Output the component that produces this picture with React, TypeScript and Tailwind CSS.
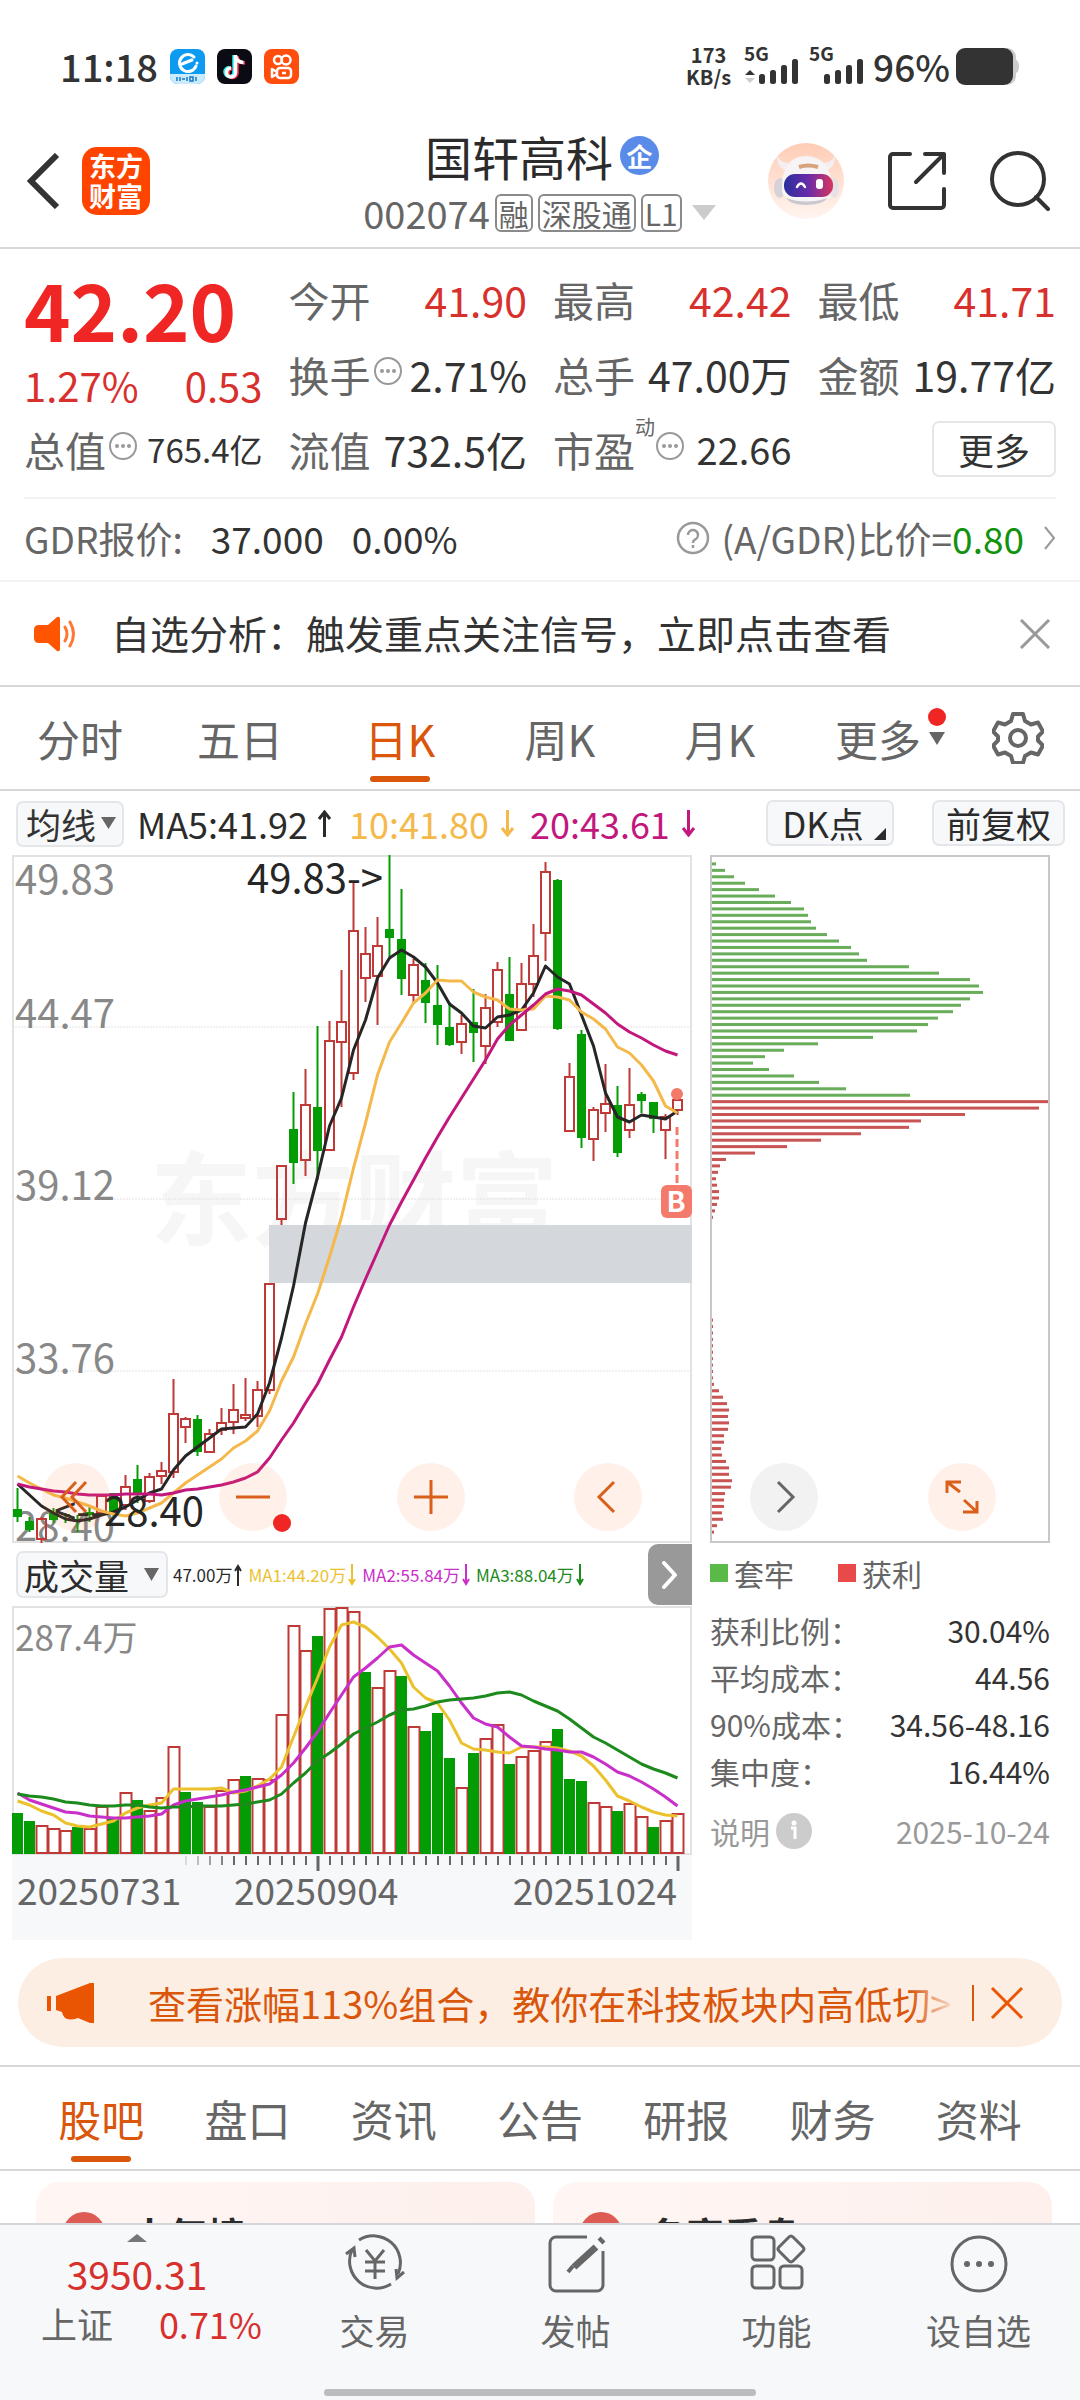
import type { ReactNode } from "react";

type Candle = [dir: "up" | "down", high: number, top: number, bottom: number, low: number];

const STEP = 12;
const START = 5.5;

const candles: Candle[] = [
    ["down", 633, 654, 662, 667],
    ["down", 662, 666, 675, 677],
    ["up", 662, 664, 684, 688],
    ["down", 653, 658, 665, 668],
    ["down", 658, 659, 660, 668],
    ["down", 660, 664, 666, 677],
    ["down", 650, 657, 660, 667],
    ["up", 640, 641, 658, 660],
    ["down", 638, 638, 658, 662],
    ["up", 620, 632, 650, 655],
    ["down", 610, 624, 640, 648],
    ["up", 618, 622, 646, 648],
    ["up", 607, 616, 621, 629],
    ["up", 524, 559, 617, 623],
    ["up", 562, 564, 572, 588],
    ["down", 560, 564, 597, 601],
    ["up", 574, 579, 597, 597],
    ["up", 553, 568, 575, 580],
    ["up", 529, 555, 567, 579],
    ["up", 523, 560, 563, 566],
    ["up", 526, 535, 561, 572],
    ["up", 428, 429, 535, 539],
    ["up", 310, 311, 364, 370],
    ["down", 237, 274, 308, 329],
    ["up", 214, 250, 305, 321],
    ["down", 171, 252, 296, 325],
    ["up", 166, 186, 295, 296],
    ["up", 115, 167, 187, 252],
    ["up", 27, 76, 218, 225],
    ["up", 72, 99, 123, 147],
    ["up", 62, 91, 121, 170],
    ["down", 0, 74, 83, 102],
    ["down", 34, 84, 124, 140],
    ["up", 104, 110, 140, 148],
    ["down", 108, 125, 148, 168],
    ["down", 110, 150, 170, 190],
    ["down", 147, 172, 190, 191],
    ["up", 160, 169, 187, 199],
    ["down", 134, 167, 178, 207],
    ["up", 139, 153, 191, 209],
    ["up", 107, 115, 167, 172],
    ["down", 102, 139, 186, 186],
    ["up", 108, 129, 175, 175],
    ["up", 69, 101, 129, 142],
    ["up", 7, 17, 78, 106],
    ["down", 24, 25, 174, 175],
    ["up", 208, 222, 276, 276],
    ["down", 175, 179, 283, 293],
    ["up", 252, 255, 284, 306],
    ["up", 209, 249, 258, 277],
    ["down", 231, 250, 298, 302],
    ["up", 213, 250, 275, 283],
    ["down", 237, 239, 246, 258],
    ["down", 247, 247, 264, 278],
    ["up", 259, 262, 275, 304],
    ["up", 237, 245, 255, 260],
];

const ma5 = [
    629, 640, 651, 658, 664, 666, 664, 660, 657, 652, 645, 638, 634, 615, 601, 592, 583, 574, 573, 572, 559, 528,
    483, 431, 368, 322, 271, 243, 195, 165, 123, 103, 95, 102, 112, 128, 149, 158, 171, 173, 162, 160, 155, 138,
    111, 122, 129, 160, 191, 238, 262, 267, 260, 262, 264, 256,
];
const ma10 = [
    621, 628, 634, 640, 643, 647, 651, 656, 659, 661, 658, 653, 648, 638, 628, 620, 612, 604, 593, 586, 576, 556,
    526, 502, 469, 439, 402, 362, 313, 268, 220, 187, 168, 148, 138, 125, 126, 126, 137, 142, 145, 154, 155, 154,
    141, 142, 145, 157, 164, 174, 192, 198, 210, 226, 251, 258,
];
const ma20 = [
    629, 632, 634, 636, 637, 639, 640, 640, 640, 639, 639, 639, 640, 638, 635, 634, 632, 630, 627, 623, 617, 603,
    585, 568, 548, 529, 505, 482, 452, 424, 397, 370, 347, 325, 303, 282, 262, 243, 224, 205, 184, 170, 160, 150,
    139, 134, 136, 140, 149, 158, 169, 177, 183, 190, 196, 200,
];

// negative = falling day
const volumes = [
    -41, -33, 29, 26, 24, -27, 26, 48, -37, 62, -54, 44, 57, 108, -62, -52, 48, 64, 75, -78, 76, 75, 140, 229, 204,
    -218, 246, 247, 243, -182, 167, 184, -178, 128, -123, -141, -96, 67, -101, 116, 130, -90, 98, 104, 113, -125,
    -75, -73, 52, 48, -43, 51, 38, -27, 34, 41,
];
const vma1 = [
    195, 199, 205, 209, 217, 220, 221, 218, 215, 207, 202, 199, 197, 183, 183, 183, 183, 182, 187, 185, 180, 173,
    161, 131, 101, 72, 41, 19, 16, 21, 31, 43, 57, 81, 92, 97, 114, 137, 143, 144, 146, 147, 141, 141, 141, 142,
    145, 150, 160, 174, 190, 195, 201, 206, 209, 210,
];
const vma2 = [
    187, 194, 198, 202, 206, 207, 210, 211, 212, 212, 211, 210, 208, 199, 195, 193, 191, 189, 186, 184, 181, 178,
    169, 157, 142, 126, 107, 89, 71, 62, 52, 41, 39, 49, 57, 65, 80, 97, 112, 118, 121, 131, 140, 141, 143, 144,
    146, 146, 151, 158, 166, 170, 176, 183, 191, 200,
];
const vma3 = [
    188, 190, 191, 193, 196, 197, 199, 200, 200, 199, 199, 201, 202, 201, 201, 200, 200, 200, 199, 198, 196, 194,
    188, 177, 167, 155, 147, 138, 128, 122, 116, 109, 104, 103, 100, 96, 94, 93, 92, 90, 87, 86, 89, 95, 100, 105,
    113, 122, 131, 137, 144, 151, 158, 163, 167, 172,
];

const trapped = [
    1, 5, 14, 23, 34, 48, 64, 80, 93, 97, 100, 105, 116, 128, 140, 148, 156, 198, 228, 259, 268, 272, 259, 250, 242,
    227, 217, 206, 162, 107, 73, 54, 42, 58, 83, 108, 135, 199,
];
const profit = [
    339, 328, 254, 210, 198, 150, 110, 76, 44, 15, 9, 7, 5, 6, 8, 8, 6, 4, 2, 1, 0, 0, 0, 0, 0, 0, 0, 0, 0, 1, 1, 1,
    1, 1, 2, 2, 2, 2, 2, 2, 2, 2, 2, 2, 3, 8, 12, 16, 18, 17, 18, 17, 13, 13, 10, 11, 15, 18, 18, 21, 20, 14, 13,
    13, 11, 12, 6, 3, 1,
];

const line = (ys: number[]) => ys.map((y, i) => `${START + i * STEP},${y}`).join(" ");

const RED = "#bf3a36";
const GREEN = "#049c04";

function StatusBar() {
    return (
        <div className="flex h-[100px] items-end justify-between pr-[60px] pb-[12px] pl-[60px] text-[#333]">
            <div className="flex items-center gap-[12px]">
                <span className="text-[38px] leading-[44px] font-medium">11:18</span>
                <svg width="35" height="35" viewBox="0 0 35 35">
                    <rect width="35" height="35" rx="8" fill="#0c9bf0" />
                    <path d="M0 25h35v2a8 8 0 0 1-8 8H8a8 8 0 0 1-8-8z" fill="#c9ebfb" />
                    <path d="M24 8a8.500 8.500 0 1 0 2 9M12 15l10-4" fill="none" stroke="#fff" strokeWidth="3" strokeLinecap="round" />
                    <circle cx="27" cy="14" r="1.500" fill="#fff" />
                    <path d="M7 28v4m3-4v4m2-2h3m2-2v4m3-4h3v4h-3zm6 0v4" stroke="#1577c4" strokeWidth="1.500" fill="none" />
                </svg>
                <svg width="35" height="35" viewBox="0 0 35 35">
                    <rect width="35" height="35" rx="8" fill="#0b0b14" />
                    <g fill="none" strokeWidth="3.500">
                        <path d="M17 6v17a4.500 4.500 0 1 1-4.500-4.500M17 7c1 4 4 6 8 6" stroke="#25f4ee" />
                        <path d="M20 7v17a4.500 4.500 0 1 1-4.500-4.500M20 8c1 4 4 6 8 6" stroke="#fe2c55" />
                        <path d="M18.500 6v17.500a4.500 4.500 0 1 1-4.500-4.500M18.500 7c1 4 4 6.500 8 6.500" stroke="#fff" />
                    </g>
                </svg>
                <svg width="35" height="35" viewBox="0 0 35 35">
                    <rect width="35" height="35" rx="8" fill="#ff4d0d" />
                    <g fill="none" stroke="#fff" strokeWidth="2.500">
                        <circle cx="14" cy="11" r="4" />
                        <circle cx="22" cy="11" r="4.500" />
                        <rect x="13" y="19" width="14" height="10" rx="3" />
                        <path d="M13 23l-5-3v8l5-3" strokeLinejoin="round" />
                        <path d="M18 24h4" />
                    </g>
                </svg>
            </div>
            <div className="flex items-center">
                <div className="mr-[12px] text-center text-[20px] leading-[22px] font-bold">
                    173
                    <br />
                    KB/s
                </div>
                <Signal arrows />
                <Signal />
                <span className="mr-[6px] text-[37px] leading-[44px] font-medium">96%</span>
                <svg width="64" height="37" viewBox="0 0 64 37">
                    <path d="M50 0h1a9 9 0 0 1 9 9v3q3 1 3 6.500t-3 6.500v3a9 9 0 0 1-9 9h-1z" fill="#ccc" />
                    <rect width="57" height="37" rx="9" fill="#333" />
                </svg>
            </div>
        </div>
    );
}

function Signal({ arrows }: { arrows?: boolean }) {
    return (
        <svg width="65" height="38" viewBox="0 0 65 38" className="overflow-visible text-[19px] font-bold">
            <text x="1" y="14" fill="#333">5G</text>
            {arrows && (
                <>
                    <path d="M2 28l5-5 5 5z" fill="#333" />
                    <path d="M2 31l5 5 5-5z" fill="#ccc" />
                </>
            )}
            <g fill="#333">
                <rect x="16" y="27" width="6" height="10" rx="2.500" />
                <rect x="27" y="23" width="6" height="14" rx="2.500" />
                <rect x="38" y="18" width="6" height="19" rx="2.500" />
                <rect x="49" y="12" width="6" height="25" rx="2.500" />
            </g>
        </svg>
    );
}

function Robot() {
    return (
        <svg width="76" height="76" viewBox="0 0 76 76">
            <defs>
                <linearGradient id="halo" x1="0" y1="0" x2="0" y2="1">
                    <stop offset="0" stopColor="#ffccb5" />
                    <stop offset="1" stopColor="#fff5f0" />
                </linearGradient>
                <linearGradient id="visor" x1="0" y1="0" x2="1" y2="0">
                    <stop offset="0" stopColor="#2a2f9e" />
                    <stop offset="0.500" stopColor="#6a2ba8" />
                    <stop offset="1" stopColor="#d8365e" />
                </linearGradient>
            </defs>
            <circle cx="38" cy="38" r="38" fill="url(#halo)" />
            <path d="M9 12q-1 12 8 15l4-7q-9 0-12-8zM67 12q1 12-8 15l-4-7q9 0 12-8z" fill="#f4eeee" />
            <ellipse cx="12" cy="45" rx="6" ry="10" fill="#d6d2d8" />
            <ellipse cx="66" cy="45" rx="5" ry="10" fill="#e6e1e4" />
            <path d="M14 46q-1-32 24-33 26 1 26 33 0 15-26 16-24-1-24-16z" fill="#f7f4f5" />
            <path d="M18 55q20 7 42 0-6 7-22 7t-20-7z" fill="#ccc8d0" />
            <rect x="16" y="31" width="49" height="23" rx="11" fill="url(#visor)" />
            <path d="M31 24q9-3 19 0" stroke="#d8a27c" strokeWidth="4" fill="none" />
            <path d="M29 44q4-7 8 0" stroke="#fff" strokeWidth="2.500" fill="none" strokeLinecap="round" />
            <rect x="48" y="36" width="7" height="10" rx="3" fill="#fff" />
        </svg>
    );
}

function Tag({ children }: { children: ReactNode }) {
    return (
        <span className="flex h-[38px] items-center rounded-[6px] border-2 border-[#8a8a8a] px-[2px] text-[30px] leading-[36px]">{children}</span>
    );
}

function Header() {
    return (
        <header className="grid h-[149px] grid-cols-[1fr_auto_1fr] items-center border-b-2 border-[#d8d8d8] pr-[30px] pl-[26px]">
            <div className="flex items-center gap-[22px] pt-[14px]">
                <button aria-label="返回">
                    <svg width="34" height="56" viewBox="0 0 34 56" fill="none" stroke="#333" strokeWidth="6">
                        <path d="M31 2L5 28l26 26" />
                    </svg>
                </button>
                <a href="#home" className="flex size-[68px] flex-col justify-center rounded-[15px] bg-[#ff4400] text-center text-[27px] leading-[30px] font-bold text-white">
                    <span>东方</span>
                    <span>财富</span>
                </a>
            </div>
            <div className="ml-[8px] flex flex-col items-center pt-[20px]">
                <h1 className="flex items-center gap-[7px] text-[47px] leading-[58px] text-[#2b2b2b]">
                    国轩高科
                    <span className="flex size-[39px] items-center justify-center rounded-full bg-[#5a8be8] text-[26px] leading-[28px] font-bold text-white">企</span>
                </h1>
                <button className="flex items-center gap-[5px] text-[#666]">
                    <span className="text-[38px] leading-[56px]">002074</span>
                    <Tag>融</Tag>
                    <Tag>深股通</Tag>
                    <Tag>L1</Tag>
                    <svg width="34" height="16" viewBox="0 0 34 16" fill="#ccc">
                        <path d="M5 0h24L17 15z" />
                    </svg>
                </button>
            </div>
            <div className="flex items-center justify-end gap-[43px] pt-[14px]">
                <button aria-label="智能助手"><Robot /></button>
                <button aria-label="分享">
                    <svg width="60" height="60" viewBox="0 0 60 60" fill="none" stroke="#333" strokeWidth="4" strokeLinecap="round" strokeLinejoin="round">
                        <path d="M23 3H6a3 3 0 0 0-3 3v48a3 3 0 0 0 3 3h48a3 3 0 0 0 3-3V38" />
                        <path d="M38 3h19v19M57 3L29 31" />
                    </svg>
                </button>
                <button aria-label="搜索">
                    <svg width="60" height="60" viewBox="0 0 60 60" fill="none" stroke="#333" strokeWidth="4" strokeLinecap="round">
                        <circle cx="28" cy="28" r="26" />
                        <path d="M46 46l12 12" />
                    </svg>
                </button>
            </div>
        </header>
    );
}

function Dots() {
    return (
        <svg width="30" height="30" viewBox="0 0 30 30" className="mb-[6px] shrink-0">
            <circle cx="15" cy="15" r="13" fill="none" stroke="#999" strokeWidth="2" />
            <g fill="#999">
                <circle cx="9" cy="15" r="2" />
                <circle cx="15" cy="15" r="2" />
                <circle cx="21" cy="15" r="2" />
            </g>
        </svg>
    );
}

function Stat({ label, value, red, dots }: { label: string; value: string; red?: boolean; dots?: boolean }) {
    return (
        <div className="flex items-center justify-between whitespace-nowrap">
            <span className="flex items-center gap-[2px] text-[41px] leading-[56px] text-[#666]">
                {label}
                {dots && <Dots />}
            </span>
            <span className={red ? "text-[41px] leading-[56px] text-[#d8302d]" : "text-[41px] leading-[56px] text-[#333]"}>{value}</span>
        </div>
    );
}

function Quote() {
    return (
        <section className="px-[24px]">
            <div className="grid auto-rows-[75px] grid-cols-4 gap-x-[26px] border-b-2 border-[#f2f2f4] pt-[12px] pb-[11px]">
                <div className="row-span-2 whitespace-nowrap">
                    <div className="text-[79px] leading-[94px] font-bold text-[#f02624]">42.20</div>
                    <div className="flex justify-between text-[40px] leading-[60px] text-[#d8302d]">
                        <span>1.27%</span>
                        <span>0.53</span>
                    </div>
                </div>
                <Stat label="今开" value="41.90" red />
                <Stat label="最高" value="42.42" red />
                <Stat label="最低" value="41.71" red />
                <Stat label="换手" value="2.71%" dots />
                <Stat label="总手" value="47.00万" />
                <Stat label="金额" value="19.77亿" />
                <div className="flex items-center justify-between whitespace-nowrap">
                    <span className="flex items-center gap-[2px] text-[41px] leading-[56px] text-[#666]">
                        总值
                        <Dots />
                    </span>
                    <span className="text-[33px] leading-[56px] text-[#333]">765.4亿</span>
                </div>
                <Stat label="流值" value="732.5亿" />
                <div className="flex items-center justify-between whitespace-nowrap">
                    <span className="flex items-center text-[41px] leading-[56px] text-[#666]">
                        市盈
                        <sup className="mb-[24px] text-[20px] leading-[24px]">动</sup>
                        <Dots />
                    </span>
                    <span className="text-[38px] leading-[56px] text-[#333]">22.66</span>
                </div>
                <div className="flex items-center justify-end">
                    <button className="h-[56px] w-[124px] rounded-[7px] border-2 border-[#e6e6e6] text-[36px] leading-[48px] text-[#333]">更多</button>
                </div>
            </div>
            <a href="#gdr" className="flex h-[81px] items-center justify-between pb-[4px] text-[37px] leading-[52px] text-[#333]">
                <span className="flex gap-[28px]">
                    <span className="text-[#666]">GDR报价:</span>
                    <span>37.000</span>
                    <span>0.00%</span>
                </span>
                <span className="flex items-center text-[#666]">
                    <svg width="34" height="34" viewBox="0 0 34 34" fill="none" stroke="#999" strokeWidth="2.500" className="mr-[12px]">
                        <circle cx="17" cy="17" r="15" />
                        <path d="M12 14a5 5 0 1 1 7 4.500q-2 1-2 3.500M17 24v3" />
                    </svg>
                    (A/GDR)比价=<span className="text-[#12920f]">0.80</span>
                    <svg width="12" height="24" viewBox="0 0 12 24" fill="none" stroke="#999" strokeWidth="2" className="ml-[20px]">
                        <path d="M1 1l9 11-9 11" />
                    </svg>
                </span>
            </a>
        </section>
    );
}

function Notice() {
    return (
        <div className="flex h-[107px] items-center border-t-2 border-b-2 border-t-[#f2f2f4] border-b-[#d8d8d8] pr-[29px] pl-[34px]">
            <svg width="44" height="36" viewBox="0 0 44 36" className="mr-[33px]">
                <path d="M5 9h9l9-8q3-1 3 2v30q0 3-3 2l-9-8H5q-5 0-5-5v-8q0-5 5-5z" fill="#ff5500" />
                <path d="M31 11q4 7 0 14M36 6q7 12 0 24" fill="none" stroke="#ff7733" strokeWidth="3" strokeLinecap="round" />
            </svg>
            <p className="flex-1 pb-[3px] text-[39px] leading-[56px] text-[#333]">自选分析：触发重点关注信号，立即点击查看</p>
            <button aria-label="关闭">
                <svg width="32" height="30" viewBox="0 0 32 30" stroke="#999" strokeWidth="3">
                    <path d="M2 1l28 28M30 1L2 29" />
                </svg>
            </button>
        </div>
    );
}

const periods = ["分时", "五日", "日K", "周K", "月K"];

function PeriodTabs() {
    return (
        <nav className="grid h-[104px] grid-cols-[repeat(5,4fr)_4.5fr_2.5fr] border-b-2 border-[#d8d8d8] text-[43px] leading-[64px] text-[#666]">
            {periods.map((name) => (
                <button key={name} className={name === "日K" ? "relative text-[#d9560b]" : "relative"}>
                    {name}
                    {name === "日K" && <span className="absolute bottom-[7px] left-1/2 h-[6px] w-[60px] -translate-x-1/2 rounded-full bg-[#d9560b]" />}
                </button>
            ))}
            <button className="relative flex items-center justify-center gap-[8px]">
                更多
                <svg width="16" height="13" viewBox="0 0 16 13" fill="#666">
                    <path d="M0 0h16L8 13z" />
                </svg>
                <span className="absolute top-[21px] right-[34px] size-[18px] rounded-full bg-[#f02624]" />
            </button>
            <button aria-label="设置" className="flex items-center justify-center pr-[24px]">
                <svg width="52" height="52" viewBox="0 0 52 52" fill="none" stroke="#666" strokeWidth="4" strokeLinejoin="round">
                    <path d="M21 2h10l2 7 6 3.500 7-2 5 9-5 5v4l5 5-5 9-7-2-6 3.500-2 7H21l-2-7-6-3.500-7 2-5-9 5-5v-4l-5-5 5-9 7 2L19 9z" />
                    <circle cx="26" cy="26" r="8" />
                </svg>
            </button>
        </nav>
    );
}

function MaBar() {
    return (
        <div className="flex h-[64px] items-center pr-[15px] pl-[16px] text-[36px] leading-[46px] whitespace-nowrap">
            <div className="relative mr-[13px]">
                <select aria-label="主图指标" className="h-[46px] w-[108px] appearance-none rounded-[7px] border-2 border-[#e4e6ea] bg-[#f7f8fa] pl-[8px] text-[35px] leading-[42px] text-[#333]">
                    <option>均线</option>
                </select>
                <svg width="15" height="12" viewBox="0 0 15 12" fill="#666" className="pointer-events-none absolute top-[17px] right-[8px]">
                    <path d="M0 0h15L7.500 12z" />
                </svg>
            </div>
            <span className="mr-[17px] flex items-center gap-[9px] text-[#2b2b2b]">MA5:41.92<Arrow up /></span>
            <span className="mr-[15px] flex items-center gap-[11px] text-[#f4b94a]">10:41.80<Arrow /></span>
            <span className="flex flex-1 items-center gap-[11px] text-[#c2187e]">20:43.61<Arrow /></span>
            <button className="relative mr-[38px] h-[46px] w-[128px] rounded-[7px] border-2 border-[#e4e6ea] bg-[#f7f8fa] pr-[14px] text-[35px] leading-[42px] text-[#2b2b2b]">
                DK点
                <svg width="12" height="12" viewBox="0 0 12 12" fill="#2b2b2b" className="absolute right-[6px] bottom-[4px]">
                    <path d="M12 0v12H0z" />
                </svg>
            </button>
            <button className="h-[46px] w-[133px] rounded-[7px] border-2 border-[#e4e6ea] bg-[#f7f8fa] text-[35px] leading-[42px] text-[#2b2b2b]">前复权</button>
        </div>
    );
}

function Arrow({ up, small }: { up?: boolean; small?: boolean }) {
    return (
        <svg width={small ? 8 : 15} height={small ? 22 : 27} viewBox={small ? "0 0 8 22" : "0 0 15 27"} fill="none" stroke="currentColor" strokeWidth={small ? 2 : 3}>
            {small ? (
                up ? <path d="M4 22V3M1 7l3-5 3 5" /> : <path d="M4 0v19M1 15l3 5 3-5" />
            ) : up ? (
                <path d="M7.500 27V2M2 9l5.500-7L13 9" />
            ) : (
                <path d="M7.500 0v25M2 18l5.500 7 5.500-7" />
            )}
        </svg>
    );
}

function KLineChart() {
    return (
        <svg viewBox="0 0 680 688" className="block h-auto w-full">
            <text x="138" y="383" fontSize="102" fontWeight="700" fill="#f6f6f6">东方财富</text>
            <g stroke="#e2e2e2" strokeWidth="2">
                <path d="M1 688V1h678v687" fill="none" />
                <path d="M0 687h680" />
                <path d="M0 172h680M0 344h680M0 516h680" strokeDasharray="2 1" strokeWidth="1" />
            </g>
            <rect x="257" y="370" width="423" height="58" fill="#d4d7dc" />
            <g fill="#888" fontSize="40">
                <text x="3" y="39">49.83</text>
                <text x="3" y="173">44.47</text>
                <text x="3" y="345">39.12</text>
                <text x="3" y="518">33.76</text>
                <text x="3" y="686">28.40</text>
            </g>
            {candles.map(([dir, high, top, bottom, low], i) => {
                const x = START + i * STEP;
                const h = Math.max(bottom - top, 1);
                return dir === "down" ? (
                    <g key={i}>
                        <path d={`M${x} ${high}V${low}`} stroke={GREEN} strokeWidth="2" />
                        <rect x={x - 4.5} y={top} width="9" height={h} fill={GREEN} />
                    </g>
                ) : (
                    <g key={i} stroke={RED} strokeWidth="2" fill="none">
                        <path d={`M${x} ${high}V${top}M${x} ${bottom}V${low}`} />
                        <rect x={x - 4.5} y={top} width="9" height={h} />
                    </g>
                );
            })}
            <g fill="none" strokeWidth="3" strokeLinejoin="round">
                <polyline points={line(ma5)} stroke="#262626" />
                <polyline points={line(ma10)} stroke="#f4b94a" />
                <polyline points={line(ma20)} stroke="#c2187e" />
            </g>
            <g fill="#262626" fontSize="40">
                <text x="235" y="38">49.83-&gt;</text>
                <text x="192" y="671" textAnchor="end">&lt;--28.40</text>
            </g>
            <circle cx="665" cy="239" r="6" fill="#f47b6c" />
            <path d="M665 272v62" stroke="#f47b6c" strokeWidth="3" strokeDasharray="8 4" />
            <rect x="649" y="330" width="31" height="33" rx="6" fill="#f47b6c" />
            <text x="664" y="357" fontSize="28" fontWeight="700" fill="#fff" textAnchor="middle">B</text>
        </svg>
    );
}

const roundButton = "flex size-[68px] items-center justify-center rounded-full bg-[#ff7733]/10";

function RoundIcon({ d, color = "#d9601a" }: { d: string; color?: string }) {
    return (
        <svg width="36" height="36" viewBox="0 0 36 36" fill="none" stroke={color} strokeWidth="3">
            <path d={d} />
        </svg>
    );
}

function VolumeChart() {
    return (
        <svg viewBox="0 0 680 334" className="block h-auto w-full">
            <rect y="248" width="680" height="86" fill="#f7f8fa" />
            <path d="M1 248V1h678v247z" fill="none" stroke="#e2e2e2" strokeWidth="2" />
            <text x="3" y="45" fontSize="35" fill="#888">287.4万</text>
            {volumes.map((v, i) => {
                const x = START + i * STEP;
                return v < 0 ? (
                    <rect key={i} x={x - 5.5} y={248 + v} width="11" height={-v} fill={GREEN} />
                ) : (
                    <rect key={i} x={x - 5} y={249 - v} width="11" height={v - 2} fill="#fff" stroke={RED} strokeWidth="2" />
                );
            })}
            <g fill="none" strokeWidth="3" strokeLinejoin="round">
                <polyline points={line(vma1)} stroke="#ebc22e" />
                <polyline points={line(vma2)} stroke="#c92fc9" />
                <polyline points={line(vma3)} stroke="#1c8a1c" />
            </g>
            {volumes.map((_, i) => {
                if (i < 14) return null;
                const major = i === 25 || i === 55;
                return (
                    <path
                        key={i}
                        d={`M${START + i * STEP + 0.5} 250v${major ? 15 : 9}`}
                        stroke="#666"
                        strokeWidth={major ? 3 : 2}
                        opacity={Math.min(1, (i - 13) / 5)}
                    />
                );
            })}
            <g fill="#666" fontSize="37">
                <text x="5" y="299">20250731</text>
                <text x="222" y="299">20250904</text>
                <text x="665" y="299" textAnchor="end">20251024</text>
            </g>
        </svg>
    );
}

function ChipsChart() {
    return (
        <svg viewBox="0 0 340 688" className="block h-auto w-full">
            {trapped.map((w, i) => (
                <rect key={i} x="1" y={1 + i * 6.425} width={w} height="3" fill="#69ac5a" />
            ))}
            {profit.map((w, i) => (
                <rect key={i} x="1" y={1 + (i + trapped.length) * 6.425} width={w} height="3" fill="#c85454" />
            ))}
            <path d="M1 1h338v686H1z" fill="none" stroke="#c8c8c8" strokeWidth="2" />
        </svg>
    );
}

const chipStats = [
    ["获利比例：", "30.04%"],
    ["平均成本：", "44.56"],
    ["90%成本：", "34.56-48.16"],
    ["集中度：", "16.44%"],
];

function Charts() {
    return (
        <div className="grid grid-cols-[692fr_388fr]">
            <div className="pl-[12px]">
                <div className="relative">
                    <KLineChart />
                    <div className="absolute right-[50px] bottom-[12px] left-[30px] flex justify-between">
                        <button aria-label="最早" className={roundButton}><RoundIcon d="M18 3L4 18l14 15M28 3L14 18l14 15" /></button>
                        <button aria-label="缩小" className={`${roundButton} relative`}>
                            <RoundIcon d="M1 18h34" />
                            <span className="absolute -right-[4px] -bottom-[1px] size-[18px] rounded-full bg-[#f02624]" />
                        </button>
                        <button aria-label="放大" className={roundButton}><RoundIcon d="M1 18h34M18 1v34" /></button>
                        <button aria-label="左移" className={roundButton}><RoundIcon d="M24 3L9 18l15 15" /></button>
                    </div>
                </div>
                <div className="flex h-[63px] items-center whitespace-nowrap">
                    <div className="relative mr-[5px] ml-[4px]">
                        <select aria-label="副图指标" className="h-[47px] w-[152px] appearance-none rounded-[7px] border-2 border-[#e4e6ea] bg-[#f7f8fa] pl-[6px] text-[35px] leading-[43px] text-[#2b2b2b]">
                            <option>成交量</option>
                        </select>
                        <svg width="15" height="13" viewBox="0 0 15 13" fill="#666" className="pointer-events-none absolute top-[17px] right-[9px]">
                            <path d="M0 0h15L7.500 13z" />
                        </svg>
                    </div>
                    <div className="flex flex-1 items-center gap-[6px] text-[17px] leading-[24px]">
                        <span className="flex items-center gap-[2px] text-[#2b2b2b]">47.00万<Arrow up small /></span>
                        <span className="flex items-center gap-[2px] text-[#ebc22e]">MA1:44.20万<Arrow small /></span>
                        <span className="flex items-center gap-[2px] text-[#c92fc9]">MA2:55.84万<Arrow small /></span>
                        <span className="flex items-center gap-[2px] text-[#1c8a1c]">MA3:88.04万<Arrow small /></span>
                    </div>
                    <button aria-label="展开" className="flex h-[61px] w-[44px] items-center justify-center rounded-l-[10px] bg-[#999]">
                        <svg width="16" height="28" viewBox="0 0 16 28" fill="none" stroke="#fff" strokeWidth="4" strokeLinecap="round" strokeLinejoin="round">
                            <path d="M2 2l11 12L2 26" />
                        </svg>
                    </button>
                </div>
                <VolumeChart />
            </div>
            <div className="pr-[30px] pl-[18px]">
                <div className="relative">
                    <ChipsChart />
                    <div className="absolute right-[54px] bottom-[12px] left-[40px] flex justify-between">
                        <button aria-label="右移" className="flex size-[68px] items-center justify-center rounded-full bg-[#f2f2f2]">
                            <RoundIcon d="M12 3l15 15-15 15" color="#666" />
                        </button>
                        <button aria-label="全屏" className={roundButton}>
                            <RoundIcon d="M3 14V3h14M3 3l13 10M19 33h14V22M33 33L20 21" />
                        </button>
                    </div>
                </div>
                <div className="flex h-[60px] items-center gap-[44px] text-[30px] leading-[44px] text-[#666]">
                    <span className="flex items-center gap-[6px]"><i className="size-[18px] bg-[#5bb947]" />套牢</span>
                    <span className="flex items-center gap-[6px]"><i className="size-[18px] bg-[#e84a4a]" />获利</span>
                </div>
                <dl className="mt-[4px] text-[30px] leading-[47px]">
                    {chipStats.map(([name, value]) => (
                        <div key={name} className="flex justify-between whitespace-nowrap">
                            <dt className="text-[#666]">{name}</dt>
                            <dd className="text-[#333]">{value}</dd>
                        </div>
                    ))}
                </dl>
                <div className="mt-[14px] flex items-center justify-between text-[30px] leading-[44px] text-[#999]">
                    <button className="flex items-center gap-[6px]">
                        说明
                        <svg width="36" height="36" viewBox="0 0 36 36">
                            <circle cx="18" cy="18" r="18" fill="#ccc" />
                            <circle cx="18" cy="10" r="2.500" fill="#fff" />
                            <path d="M15 15h4v11" stroke="#fff" strokeWidth="3" fill="none" />
                        </svg>
                    </button>
                    <time>2025-10-24</time>
                </div>
            </div>
        </div>
    );
}

function Banner() {
    return (
        <div className="mx-[18px] my-[18px] flex h-[89px] items-center rounded-full bg-[#fdeee4] pr-[38px] pl-[29px] text-[#d9560b]">
            <svg width="47" height="40" viewBox="0 0 47 40" fill="#ea5504" className="mr-[54px] shrink-0">
                <path d="M0 13h4v15H0zM9 13L43 0h4v40h-4l-12-5q-14 5-16-6l-6-2z" />
            </svg>
            <a href="#portfolio" className="relative min-w-0 flex-1 overflow-hidden text-[38px] leading-[56px] whitespace-nowrap">
                查看涨幅113%组合，教你在科技板块内高低切&gt;
                <span className="absolute inset-y-0 right-0 w-[48px] bg-gradient-to-r from-[#fdeee4]/0 to-[#fdeee4]" />
            </a>
            <span className="mr-[16px] ml-[14px] h-[36px] w-[2px] bg-[#d9560b]" />
            <button aria-label="关闭">
                <svg width="34" height="34" viewBox="0 0 34 34" stroke="#ea5504" strokeWidth="3">
                    <path d="M2 2l30 30M32 2L2 32" />
                </svg>
            </button>
        </div>
    );
}

const sections = ["股吧", "盘口", "资讯", "公告", "研报", "财务", "资料"];

function SectionTabs() {
    return (
        <nav className="grid h-[106px] grid-cols-7 border-y-2 border-[#d8d8d8] px-[28px] text-[43px] leading-[64px] text-[#666]">
            {sections.map((name) => (
                <button key={name} className={name === "股吧" ? "relative text-[#d9560b]" : "relative"}>
                    {name}
                    {name === "股吧" && <span className="absolute bottom-[7px] left-1/2 h-[6px] w-[60px] -translate-x-1/2 rounded-full bg-[#d9560b]" />}
                </button>
            ))}
        </nav>
    );
}

function Cards() {
    return (
        <div className="grid grid-cols-2 gap-[18px] pt-[11px] pr-[28px] pl-[36px]">
            {["人气榜", "名家看盘"].map((title) => (
                <article key={title} className="flex h-[160px] items-start rounded-[24px] bg-gradient-to-r from-[#fff6f3] to-[#fdf0ed] pt-[30px] pl-[27px]">
                    <span className="size-[42px] rounded-full bg-[#de5b54]" />
                    <h2 className="ml-[26px] text-[38px] leading-[44px] font-bold text-[#2b2b2b]">{title}</h2>
                </article>
            ))}
        </div>
    );
}

const actions: { label: string; icon: ReactNode }[] = [
    {
        label: "交易",
        icon: (
            <>
                <path d="M16 8a27 27 0 0 1 39 34M48 52A27 27 0 0 1 9 18" />
                <path d="M3 22l8-6 1 9M61 40l-7 6-1-9" />
                <path d="M23 18l9 11 9-11M32 29v18M22 30h20M22 39h20" />
            </>
        ),
    },
    {
        label: "发帖",
        icon: (
            <>
                <path d="M43 5H12a6 6 0 0 0-6 6v42a6 6 0 0 0 6 6h41a6 6 0 0 0 6-6V19" />
                <path d="M52 15L30 35M59 7l-3 3" strokeWidth="7" />
                <path d="M29 34l-5 6" strokeWidth="4" />
            </>
        ),
    },
    {
        label: "功能",
        icon: (
            <>
                <rect x="7" y="5" width="22" height="23" rx="4" />
                <path d="M44 5q2-2 4 0l10 10q2 2 0 4L48 29q-2 2-4 0L34 19q-2-2 0-4z" />
                <rect x="7" y="34" width="22" height="22" rx="4" />
                <rect x="35" y="34" width="22" height="22" rx="4" />
            </>
        ),
    },
    {
        label: "设自选",
        icon: (
            <>
                <circle cx="32" cy="32" r="27" />
                <g fill="#666" stroke="none">
                    <circle cx="20" cy="32" r="3" />
                    <circle cx="32" cy="32" r="3" />
                    <circle cx="44" cy="32" r="3" />
                </g>
            </>
        ),
    },
];

function BottomBar() {
    return (
        <footer className="h-[177px] shrink-0 border-t-2 border-[#d4d6da] bg-[#f6f8fa]">
            <div className="grid h-[164px] grid-cols-[274fr_201fr_201fr_201fr_203fr]">
                <a href="#index" className="flex flex-col items-center pt-[9px] text-[#d8302d]">
                    <svg width="20" height="8" viewBox="0 0 20 8" fill="#777">
                        <path d="M10 0l10 8H0z" />
                    </svg>
                    <span className="mt-[6px] text-[39px] leading-[50px]">3950.31</span>
                    <span className="flex w-full justify-between pr-[12px] pl-[41px] text-[36px] leading-[50px] whitespace-nowrap">
                        <span className="text-[#666]">上证</span>
                        0.71%
                    </span>
                </a>
                {actions.map(({ label, icon }) => (
                    <button key={label} className="flex flex-col items-center pt-[7px] text-[35px] leading-[50px] text-[#666]">
                        <svg width="64" height="64" viewBox="0 0 64 64" fill="none" stroke="#666" strokeWidth="3">{icon}</svg>
                        <span className="mt-[9px]">{label}</span>
                    </button>
                ))}
            </div>
            <div className="mx-auto h-[7px] w-2/5 rounded-full bg-[#bbbcbe]" />
        </footer>
    );
}

export default function App() {
    return (
        <div className="flex h-screen flex-col overflow-hidden bg-white font-['Noto_Sans_CJK_SC',sans-serif]">
            <main className="min-h-0 flex-1 overflow-hidden">
                <StatusBar />
                <Header />
                <Quote />
                <Notice />
                <PeriodTabs />
                <MaBar />
                <Charts />
                <Banner />
                <SectionTabs />
                <Cards />
            </main>
            <BottomBar />
        </div>
    );
}
